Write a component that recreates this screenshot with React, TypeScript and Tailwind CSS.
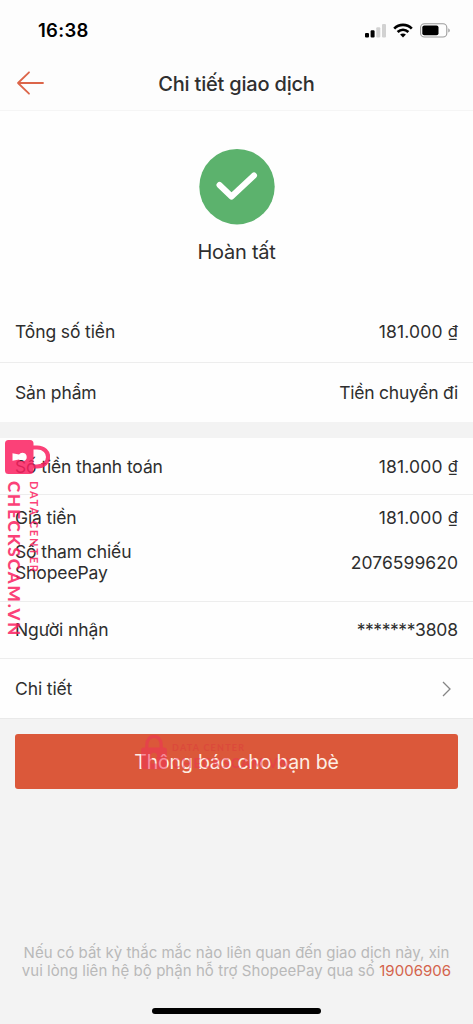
import type { ReactNode } from 'react'

function StatusIcons() {
  return (
    <div className="flex items-center gap-[7px]">
      <svg width="21" height="15" viewBox="0 0 21 15">
        <rect x="0" y="10" width="4" height="4.6" rx="1.1" fill="#000" />
        <rect x="5.6" y="7.3" width="4" height="7.3" rx="1.1" fill="#000" />
        <rect x="11.3" y="4.2" width="4" height="10.4" rx="1.1" fill="#d2d2d2" />
        <rect x="17" y="1" width="4" height="13.6" rx="1.1" fill="#d2d2d2" />
      </svg>
      <svg width="20" height="15" viewBox="0 0 20 15" fill="none" stroke="#000" strokeWidth="2.7">
        <path d="M1.2 5.6C6.2 0.7 13.8 0.7 18.8 5.6" />
        <path d="M4.6 9.1C7.8 6.2 12.2 6.2 15.4 9.1" />
        <path d="M10 14.4L7.1 11.5C8.7 10.1 11.3 10.1 12.9 11.5Z" fill="#000" stroke="none" />
      </svg>
      <svg width="31" height="15" viewBox="0 0 31 15">
        <rect x="0.6" y="0.8" width="26.2" height="13.2" rx="3.8" fill="none" stroke="#9b9b9b" strokeWidth="1.1" />
        <rect x="2.3" y="2.5" width="16.2" height="9.8" rx="2" fill="#000" />
        <path d="M28.3 5.2C30.3 6 30.3 8.8 28.3 9.6Z" fill="#9b9b9b" />
      </svg>
    </div>
  )
}

function LockIcon({ className }: { className?: string }) {
  return (
    <svg viewBox="0 0 34 46" className={className}>
      <path d="M7.5 17V13C7.5 -1.8 26.5 -1.8 26.5 13V17" fill="none" stroke="currentColor" strokeWidth="4.2" />
      <path
        fillRule="evenodd"
        fill="currentColor"
        d="M3.5 16.5H30.5Q34 16.5 34 20V41.5Q34 45 30.5 45H3.5Q0 45 0 41.5V20Q0 16.5 3.5 16.5ZM17 23.3A4.2 4.2 0 0 0 14.6 31L13.2 37.5H20.8L19.4 31A4.2 4.2 0 0 0 17 23.3Z"
      />
    </svg>
  )
}

function Row({ label, className, children }: { label: string; className: string; children: ReactNode }) {
  return (
    <div className={`flex items-center justify-between px-[15px] ${className}`}>
      <span>{label}</span>
      {children}
    </div>
  )
}

function Amount({ value }: { value: string }) {
  return (
    <span className="tracking-[0.15px]">
      {value} <span className="inline-block -translate-y-px text-[16.5px] leading-none">₫</span>
    </span>
  )
}

export default function App() {
  return (
    <div className="relative flex h-[1024px] w-[473px] flex-col overflow-hidden bg-[#f3f3f3] font-['Inter',sans-serif] text-[17.5px] leading-[21px] tracking-[-0.12px] text-[#2e2e2e]">
      <header className="h-[111px] border-b border-[#f5f5f5] bg-[#fdfdfd]">
        <div className="flex h-[56px] items-center justify-between pt-[4px] pl-[38px] pr-[22px]">
          <span className="text-[18.5px] font-semibold tracking-[0.3px] text-black">16:38</span>
          <StatusIcons />
        </div>
        <div className="grid h-[54px] grid-cols-[60px_1fr_60px] items-center">
          <button className="pl-[16px]" aria-label="Quay lại">
            <svg width="29" height="24" viewBox="0 0 29 24" fill="none" stroke="#dc6549" strokeWidth="1.8" strokeLinecap="round" strokeLinejoin="round">
              <path d="M27 12H2M13 1.3L2 12L13 22.7" />
            </svg>
          </button>
          <h1 className="pt-[2px] text-center text-[20px] font-medium tracking-[-0.2px] text-[#2f2f2f]">Chi tiết giao dịch</h1>
        </div>
      </header>

      <section className="bg-[#fefefe]">
        <div className="flex h-[190px] flex-col items-center pt-[38px]">
          <svg width="76" height="76" viewBox="0 0 76 76">
            <circle cx="38" cy="37.7" r="37.7" fill="#5cb26d" />
            <path d="M20.5 36L32.5 47.5L55 26.5" fill="none" stroke="#fff" strokeWidth="6" strokeLinecap="round" strokeLinejoin="round" />
          </svg>
          <p className="mt-[15px] text-[20px] leading-[24px] tracking-[-0.25px]">Hoàn tất</p>
        </div>
        <Row label="Tổng số tiền" className="h-[62px] border-b border-[#ededed]">
          <Amount value="181.000" />
        </Row>
        <Row label="Sản phẩm" className="h-[59px]">
          <span className="tracking-[-0.25px]">Tiền chuyển đi</span>
        </Row>
      </section>

      <section className="mt-[16px] bg-[#fefefe]">
        <Row label="Số tiền thanh toán" className="h-[57px] border-b border-[#ededed]">
          <Amount value="181.000" />
        </Row>
        <div className="h-[107px] border-b border-[#ededed] pt-[12px]">
          <Row label="Giá tiền" className="h-[21px]">
            <Amount value="181.000" />
          </Row>
          <div className="mt-[13px] flex items-center justify-between px-[15px]">
            <span className="w-[150px]">Số tham chiếu ShopeePay</span>
            <span className="tracking-[0.05px]">2076599620</span>
          </div>
        </div>
        <Row label="Người nhận" className="h-[57px] border-b border-[#ededed] pb-[2px]">
          <span>
            <span className="tracking-[-0.45px]">*******</span>3808
          </span>
        </Row>
        <Row label="Chi tiết" className="h-[60px] border-b border-[#e9e9e9]">
          <svg width="9" height="16" viewBox="0 0 9 16" className="mr-[7px]" fill="none" stroke="#858585" strokeWidth="1.3">
            <path d="M1 1L8 8L1 15" />
          </svg>
        </Row>
      </section>

      <button className="relative mx-[15px] mt-[15px] h-[55px] shrink-0 rounded-[3px] bg-[#db583a] pt-[2px] text-[19.5px] tracking-[-0.2px] text-[#fdeee4]">
        Thông báo cho bạn bè
        <span className="absolute top-[1px] left-[126px] flex items-start gap-[5px] font-['Lato',sans-serif] text-[#ef2f58] opacity-50">
          <LockIcon className="h-[35px] w-[26px]" />
          <span className="flex flex-col items-start pt-[7px]">
            <span className="text-[9px] leading-[12px] font-bold tracking-[1.25px] text-[#db3d3a]">DATA CENTER</span>
            <span className="text-[13px] leading-[18px] font-bold tracking-[1.4px]">CHECKSCAM.VN</span>
          </span>
        </span>
      </button>

      <footer className="mt-auto flex flex-col items-center pb-[10px]">
        <p className="text-center text-[15px] leading-[18px] tracking-[0.01px] whitespace-nowrap text-[#b9b9b9]">
          Nếu có bất kỳ thắc mắc nào liên quan đến giao dịch này, xin
          <br />
          <span className="tracking-[0.05px]">
            vui lòng liên hệ bộ phận hỗ trợ ShopeePay qua số <span className="text-[#d4634c]">19006906</span>
          </span>
        </p>
        <div className="mt-[28px] h-[6px] w-[169px] rounded-full bg-black" />
      </footer>

      {/* watermark, turned a quarter to the right */}
      <div className="pointer-events-none absolute top-[440px] left-[50px] flex h-[46px] w-[200px] origin-top-left rotate-90 items-start gap-[7px] font-['Lato',sans-serif] text-[#fb2161] opacity-85">
        <LockIcon className="h-[46px] w-[34px] shrink-0" />
        <span className="flex flex-col items-start pt-[10px] whitespace-nowrap">
          <span className="text-[11px] leading-[12px] font-bold tracking-[1.8px]">DATA CENTER</span>
          <span className="mt-[4px] text-[17px] leading-[20px] font-black tracking-[1.9px]">CHECKSCAM.VN</span>
        </span>
      </div>
    </div>
  )
}
